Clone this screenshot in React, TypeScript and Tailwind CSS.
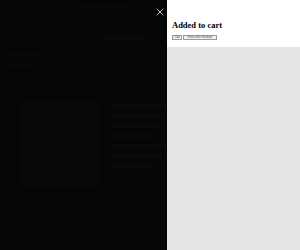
import { X } from 'lucide-react';

const lines = [56, 50, 54, 48, 56, 52, 40];

export default function App() {
  return (
    <div className="flex h-[250px] w-[300px] overflow-hidden bg-[#e6e6e6] font-['Liberation_Serif',serif]">
      {/* Dimmed page behind the drawer */}
      <div className="relative flex w-[167px] shrink-0 flex-col bg-[#060606]">
        <div className="ml-[78px] mt-[5px] h-[5px] w-[56px] bg-[#080808]" />
        <div className="ml-[103px] mt-[25px] h-[6px] w-[46px] bg-[#080808]" />
        <div className="ml-[2px] mt-[12px] flex flex-col gap-[8px]">
          <div className="h-[3px] w-[40px] bg-[#080808]" />
          <div className="h-[3px] w-[34px] bg-[#080808]" />
          <div className="h-[3px] w-[38px] bg-[#080808]" />
          <div className="h-[3px] w-[14px] bg-[#080808]" />
        </div>
        <div className="mt-[12px] flex gap-[10px] pl-[20px]">
          <div className="h-[86px] w-[80px] bg-[#080808]" />
          <div className="flex flex-col gap-[6px] pt-[3px]">
            {lines.map((w, i) => (
              <div key={i} className="h-[4px] bg-[#090909]" style={{ width: w }} />
            ))}
          </div>
        </div>
        <button className="absolute right-[1px] top-[6px] text-white">
          <X size={12} strokeWidth={1.6} />
        </button>
      </div>

      {/* Drawer */}
      <div className="flex flex-1 flex-col">
        <div className="bg-white pb-[7px] pl-[5px] pt-[20px]">
          <h2 className="text-[8.5px] font-bold leading-[11px] text-black">Added to cart</h2>
          <div className="mt-[4px] flex gap-[1px]">
            <button className="h-[5px] w-[10px] border-[0.5px] border-[#999] bg-[#f0f0f0] text-[3px] leading-none text-[#333]">
              Cart
            </button>
            <button className="h-[5px] w-[34px] border-[0.5px] border-[#999] bg-[#f0f0f0] text-[3px] leading-none text-[#333]">
              Proceed to checkout
            </button>
          </div>
        </div>
      </div>
    </div>
  );
}
